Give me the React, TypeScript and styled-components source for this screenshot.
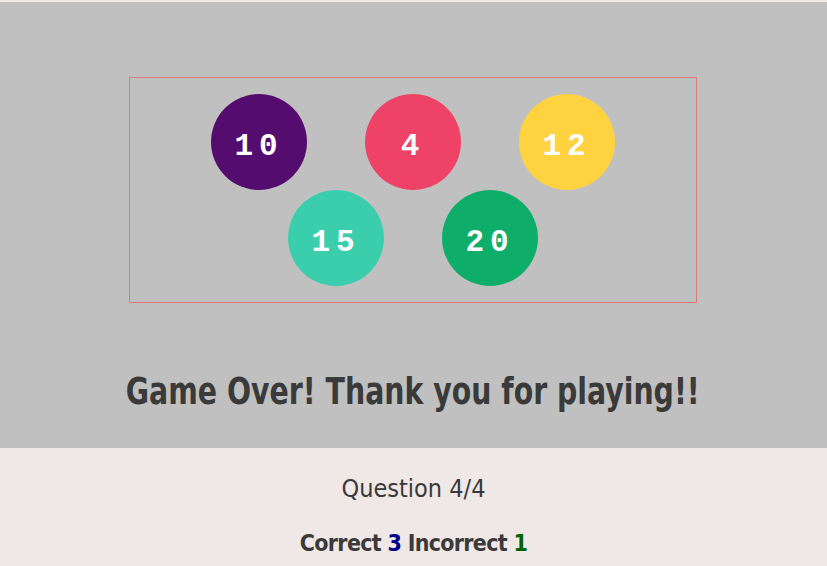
import React from 'react';
import styled, { createGlobalStyle } from 'styled-components';

const GlobalStyle = createGlobalStyle`
  html, body {
    margin: 0;
    padding: 0;
    background: #f0e8e6;
  }
  body {
    font-family: 'DejaVu Sans Condensed', 'Liberation Sans', sans-serif;
    color: #3a3a3a;
  }
`;

interface Ball {
  value: number;
  color: string;
}

const balls: Ball[] = [
  { value: 10, color: '#540d6e' },
  { value: 4, color: '#ee4266' },
  { value: 12, color: '#ffd23f' },
  { value: 15, color: '#3bceac' },
  { value: 20, color: '#0ead69' },
];

const App: React.FC = () => {
  return (
    <>
      <GlobalStyle />
      <Page>
        <GameArea>
          <BallBox>
            {balls.map((b) => (
              <BallItem key={b.value} $color={b.color}>
                {b.value}
              </BallItem>
            ))}
          </BallBox>
          <Title>Game Over! Thank you for playing!!</Title>
        </GameArea>
        <ScorePanel>
          <QuestionText>Question 4/4</QuestionText>
          <ScoreLine>
            Correct <Num $color="#00008b">3</Num> Incorrect <Num $color="#006400">1</Num>
          </ScoreLine>
        </ScorePanel>
      </Page>
    </>
  );
};

export default App;

const Page = styled.div`
  width: 827px;
  height: 566px;
  padding-top: 2px;
  box-sizing: border-box;
  display: flex;
  flex-direction: column;
`;

const GameArea = styled.div`
  height: 446px;
  background: #c0c0c0;
  display: flex;
  flex-direction: column;
  align-items: center;
  padding: 75px 1px 0 0;
  box-sizing: border-box;
`;

const BallBox = styled.div`
  width: 568px;
  height: 226px;
  border: 1px solid #e07a78;
  box-sizing: border-box;
  padding: 16px 0;
  display: flex;
  flex-wrap: wrap;
  justify-content: center;
  align-content: flex-start;
`;

const BallItem = styled.div<{ $color: string }>`
  width: 96px;
  height: 96px;
  margin: 0 29px;
  border-radius: 50%;
  background: ${(p) => p.$color};
  color: #fff;
  display: flex;
  align-items: center;
  justify-content: center;
  padding-top: 9px;
  box-sizing: border-box;
  font-family: 'Liberation Mono', 'DejaVu Sans Mono', monospace;
  font-weight: bold;
  font-size: 31px;
  letter-spacing: 6px;
`;

const Title = styled.h1`
  margin: 66px 0 0;
  font-size: 38px;
  font-weight: bold;
  color: #3a3a3a;
  white-space: nowrap;
  transform: scaleX(0.83);
`;

const ScorePanel = styled.div`
  flex: 1;
  background: #f0e8e6;
  display: flex;
  flex-direction: column;
  align-items: center;
  padding-top: 26px;
`;

const QuestionText = styled.div`
  font-size: 25px;
`;

const ScoreLine = styled.div`
  margin-top: 27px;
  font-size: 23px;
  font-weight: bold;
  letter-spacing: -0.7px;
`;

const Num = styled.span<{ $color: string }>`
  color: ${(p) => p.$color};
`;
